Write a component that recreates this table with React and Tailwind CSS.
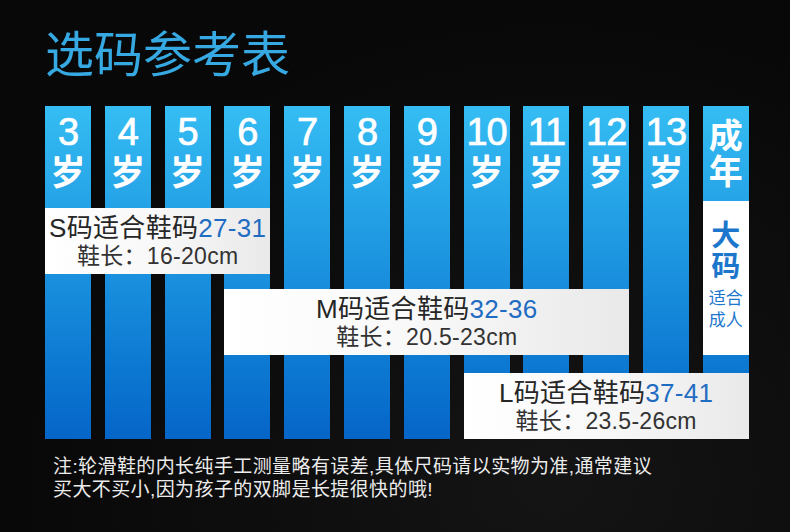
const AGES = ['3', '4', '5', '6', '7', '8', '9', '10', '11', '12', '13']
const COLS = [
  'col-start-1', 'col-start-2', 'col-start-3', 'col-start-4', 'col-start-5', 'col-start-6',
  'col-start-7', 'col-start-8', 'col-start-9', 'col-start-10', 'col-start-11', 'col-start-12',
]

const bar = 'row-[1/7] bg-linear-to-b from-[#35bdf3] to-[#0665c8]'

function SizeBox({ size, range, length, className }) {
  return (
    <div className={`z-10 flex flex-col items-center justify-center bg-linear-to-r from-white via-[#f8f8f8] to-[#e9e9e9] text-[#262626] ${className}`}>
      <div className="text-[26px] leading-[28px] tracking-[0.3px]">
        {size}码适合鞋码<span className="text-[#1f6cc2]">{range}</span>
      </div>
      <div className="mt-[1px] text-[23px] leading-[26px] text-[#333] tracking-[0.3px]">鞋长：{length}</div>
    </div>
  )
}

export default function App() {
  return (
    <div className="w-[790px] h-[532px] overflow-hidden bg-[radial-gradient(ellipse_at_70%_90%,#141414,#080808_70%)] pl-[45px] pt-[29px] font-['Liberation_Sans','Noto_Sans_CJK_SC',sans-serif]">
      <h1 className="h-[52px] text-[49px] leading-[52px] font-normal text-[#36a9e2]">选码参考表</h1>

      <div className="mt-[25px] grid grid-cols-[repeat(12,46px)] grid-rows-[102px_66px_15px_66px_18px_66px] gap-x-[13.8px]">
        {AGES.map((a, i) => (
          <div key={a} className={`${bar} ${COLS[i]} flex flex-col items-center pt-[6px] text-white`}>
            <div className="text-[38px] leading-[40px] tracking-[-1px] [-webkit-text-stroke:0.7px_white]">{a}</div>
            <div className="mt-[3px] text-[35px] leading-none font-bold">岁</div>
          </div>
        ))}

        <div className={`${bar} col-start-12 flex flex-col`}>
          <div className="h-[95px] flex flex-col items-center pt-[12px] text-[34px] leading-[36px] font-bold text-white">
            <span>成</span>
            <span>年</span>
          </div>
          <div className="h-[154px] bg-white flex flex-col items-center pt-[20px] text-[#1c77cc]">
            <span className="text-[29px] leading-[31px] font-bold">大</span>
            <span className="text-[29px] leading-[31px] font-bold">码</span>
            <span className="mt-[5px] text-[17px] leading-[22px]">适合</span>
            <span className="text-[17px] leading-[22px]">成人</span>
          </div>
        </div>

        <SizeBox size="S" range="27-31" length="16-20cm" className="col-[1/5] row-[2/3]" />
        <SizeBox size="M" range="32-36" length="20.5-23cm" className="col-[4/11] row-[4/5]" />
        <SizeBox size="L" range="37-41" length="23.5-26cm" className="col-[8/13] row-[6/7]" />
      </div>

      <p className="mt-[16px] pl-[8px] text-[19px] leading-[23px] tracking-[0.4px] text-[#ececec]">
        注:轮滑鞋的内长纯手工测量略有误差,具体尺码请以实物为准,通常建议
        <br />
        买大不买小,因为孩子的双脚是长提很快的哦!
      </p>
    </div>
  )
}
